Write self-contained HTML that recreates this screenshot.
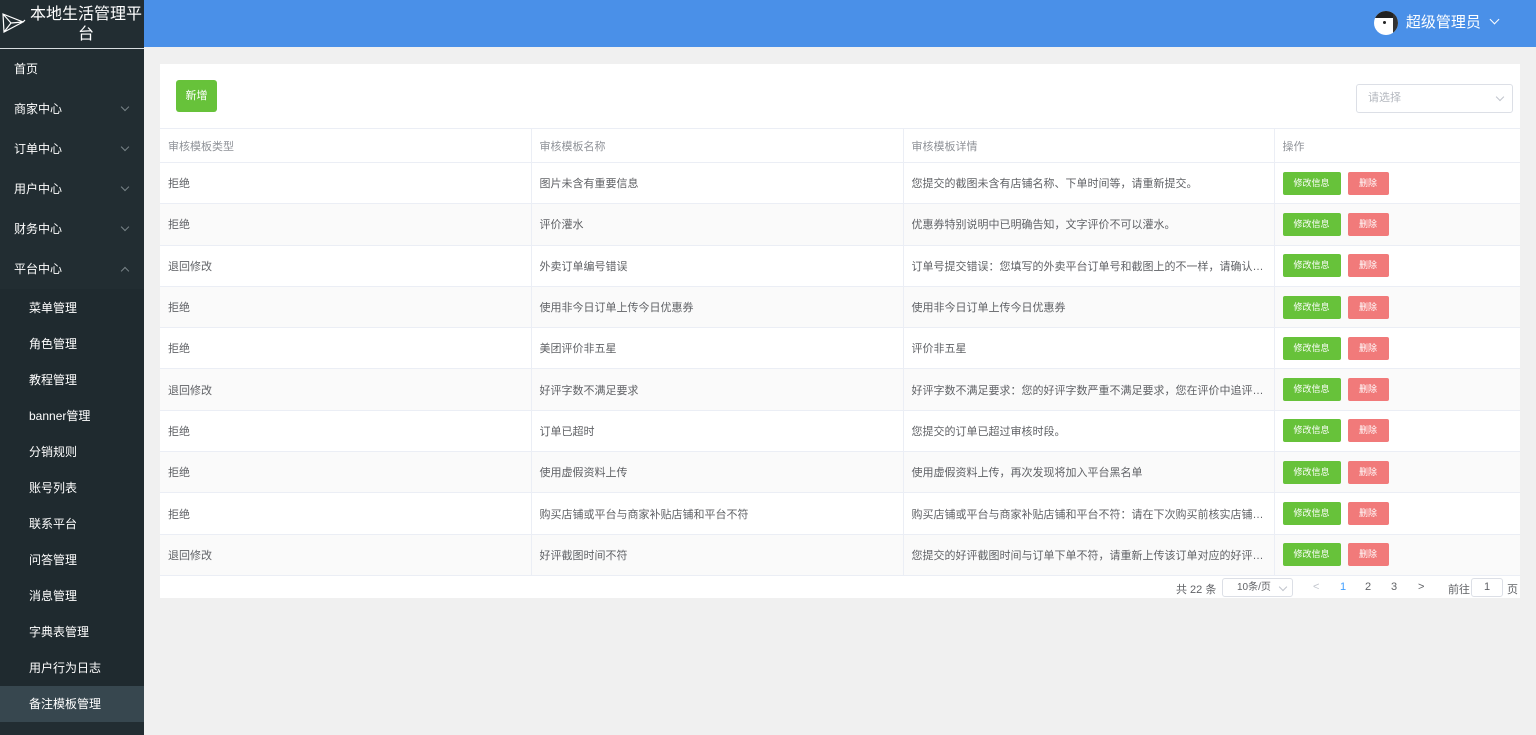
<!DOCTYPE html>
<html><head><meta charset="utf-8">
<style>
*{margin:0;padding:0;box-sizing:border-box}
body{width:1536px;height:735px;overflow:hidden;background:#f0f0f0;font-family:"Liberation Sans","Noto Sans CJK SC",sans-serif;position:relative}
.side{position:absolute;left:0;top:0;width:144px;height:735px;background:#222d32}
.logo{height:49px;border-bottom:1px solid #d8dde0;background:#222d32;color:#fff;position:relative}
.logo .t{position:absolute;left:30px;top:5px;width:112px;text-align:center;font-size:16px;line-height:20px}
.item{height:40px;line-height:40px;color:#fff;font-size:12px;padding-left:14px;position:relative}
.item .ar{position:absolute;right:16px;top:15px;width:6px;height:6px;border-right:1px solid #7a8489;border-bottom:1px solid #7a8489;transform:rotate(45deg)}
.item .up{transform:rotate(-135deg);top:19px}
.sub{height:36px;line-height:36px;color:#fff;font-size:12px;padding-left:29px;background:#1f2a2f}
.subs{padding-top:1px;background:#1f2a2f}
.sub.act{background:#37474f}
.top{position:absolute;left:144px;top:0;right:0;height:47px;background:#4a90e8}
.user{position:absolute;right:38px;top:12px;color:#fff;font-size:15px;line-height:22px;padding-left:32px}
.av{position:absolute;left:0;top:-1px;width:24px;height:24px;border-radius:50%;background:#fff;overflow:hidden}
.card{position:absolute;left:160px;top:64px;width:1360px;height:534px;background:#fff}
.btn-add{position:absolute;left:16px;top:16px;width:41px;height:32px;background:#67c23a;color:#fff;font-size:11px;line-height:32px;text-align:center;border-radius:3px}
.sel{position:absolute;left:1196px;top:20px;width:157px;height:29px;border:1px solid #dcdfe6;border-radius:3px;color:#b4b8bf;font-size:11px;line-height:27px;padding-left:11px}
.sel::after,.ps::after{content:"";position:absolute;right:9px;top:9px;width:5px;height:5px;border-right:1px solid #c0c4cc;border-bottom:1px solid #c0c4cc;transform:rotate(45deg)}
table{position:absolute;left:0;top:64px;width:1360px;border-collapse:collapse;font-size:11px;color:#606266;table-layout:fixed;border-top:1px solid #ebeef5}
td,th{border-bottom:1px solid #ebeef5;border-right:1px solid #ebeef5;text-align:left;font-weight:normal;padding-left:8px;padding-right:1px;white-space:nowrap;overflow:hidden;text-overflow:ellipsis}
th{height:34px;color:#909399}
td{height:41.3px}
tr:nth-child(odd) td{background:#fff}
tbody tr:nth-child(even) td{background:#fafafa}
tr>*:last-child{border-right:none}
.b1{display:inline-block;width:58px;height:23px;line-height:23px;text-align:center;background:#67c23a;color:#fff;font-size:9px;border-radius:2px;margin-right:7px}
.b2{display:inline-block;width:41px;height:23px;line-height:23px;text-align:center;background:#f17a7a;color:#fff;font-size:9px;border-radius:2px}
.pg{position:absolute;top:512px;left:0;width:1360px;height:22px;font-size:11px;color:#606266}
.pg span{position:absolute;top:5px}
.ps{position:absolute;left:1062px;top:2px;width:71px;height:19px;border:1px solid #dcdfe6;border-radius:3px;font-size:10px;line-height:17px;padding-left:14px}
.ps::after{top:5px;right:6px}
.pi{position:absolute;left:1311px;top:2px;width:32px;height:19px;border:1px solid #dcdfe6;border-radius:3px;text-align:center;line-height:17px}
</style></head><body>
<div class="side">
 <div class="logo">
  <svg style="position:absolute;left:2px;top:12px" width="24" height="22" viewBox="0 0 24 22" fill="none" stroke="#fff" stroke-width="1.2"><path d="M1 2 L21 10 L2 20 Z M1 2 L9 11 L2 20 M9 11 L21 10 M21 10 L23 8"/></svg>
  <div class="t">本地生活管理平台</div>
 </div>
 <div class="item">首页</div>
 <div class="item">商家中心<i class="ar"></i></div>
 <div class="item">订单中心<i class="ar"></i></div>
 <div class="item">用户中心<i class="ar"></i></div>
 <div class="item">财务中心<i class="ar"></i></div>
 <div class="item">平台中心<i class="ar up"></i></div>
 <div class="subs">
 <div class="sub">菜单管理</div>
 <div class="sub">角色管理</div>
 <div class="sub">教程管理</div>
 <div class="sub">banner管理</div>
 <div class="sub">分销规则</div>
 <div class="sub">账号列表</div>
 <div class="sub">联系平台</div>
 <div class="sub">问答管理</div>
 <div class="sub">消息管理</div>
 <div class="sub">字典表管理</div>
 <div class="sub">用户行为日志</div>
 <div class="sub act">备注模板管理</div>
 </div>
</div>
<div class="top">
 <div class="user"><div class="av"><div style="position:absolute;left:0;top:0;width:24px;height:7px;background:#222"></div><div style="position:absolute;right:0;top:0;width:5px;height:24px;background:#333"></div><div style="position:absolute;left:9px;top:10px;width:3px;height:3px;border-radius:50%;background:#222"></div></div>超级管理员 <span style="display:inline-block;width:7px;height:7px;border-right:1.5px solid #fff;border-bottom:1.5px solid #fff;transform:rotate(45deg);margin-left:6px;position:relative;top:-4px"></span></div>
</div>
<div class="card">
 <div class="btn-add">新增</div>
 <div class="sel">请选择</div>
 <table>
  <colgroup><col style="width:371px"><col style="width:372px"><col style="width:371px"><col></colgroup>
  <thead><tr><th>审核模板类型</th><th>审核模板名称</th><th>审核模板详情</th><th>操作</th></tr></thead>
  <tbody>
  <tr><td>拒绝</td><td>图片未含有重要信息</td><td>您提交的截图未含有店铺名称、下单时间等，请重新提交。</td><td><span class="b1">修改信息</span><span class="b2">删除</span></td></tr>
  <tr><td>拒绝</td><td>评价灌水</td><td>优惠券特别说明中已明确告知，文字评价不可以灌水。</td><td><span class="b1">修改信息</span><span class="b2">删除</span></td></tr>
  <tr><td>退回修改</td><td>外卖订单编号错误</td><td>订单号提交错误：您填写的外卖平台订单号和截图上的不一样，请确认是否为...</td><td><span class="b1">修改信息</span><span class="b2">删除</span></td></tr>
  <tr><td>拒绝</td><td>使用非今日订单上传今日优惠券</td><td>使用非今日订单上传今日优惠券</td><td><span class="b1">修改信息</span><span class="b2">删除</span></td></tr>
  <tr><td>拒绝</td><td>美团评价非五星</td><td>评价非五星</td><td><span class="b1">修改信息</span><span class="b2">删除</span></td></tr>
  <tr><td>退回修改</td><td>好评字数不满足要求</td><td>好评字数不满足要求：您的好评字数严重不满足要求，您在评价中追评后截图...</td><td><span class="b1">修改信息</span><span class="b2">删除</span></td></tr>
  <tr><td>拒绝</td><td>订单已超时</td><td>您提交的订单已超过审核时段。</td><td><span class="b1">修改信息</span><span class="b2">删除</span></td></tr>
  <tr><td>拒绝</td><td>使用虚假资料上传</td><td>使用虚假资料上传，再次发现将加入平台黑名单</td><td><span class="b1">修改信息</span><span class="b2">删除</span></td></tr>
  <tr><td>拒绝</td><td>购买店铺或平台与商家补贴店铺和平台不符</td><td>购买店铺或平台与商家补贴店铺和平台不符：请在下次购买前核实店铺以及对...</td><td><span class="b1">修改信息</span><span class="b2">删除</span></td></tr>
  <tr><td>退回修改</td><td>好评截图时间不符</td><td>您提交的好评截图时间与订单下单不符，请重新上传该订单对应的好评截图。</td><td><span class="b1">修改信息</span><span class="b2">删除</span></td></tr>
  </tbody>
 </table>
 <div class="pg">
  <span style="left:1016px">共 22 条</span>
  <div class="ps">10条/页</div>
  <span style="left:1153px;color:#c0c4cc">&lt;</span>
  <span style="left:1180px;color:#409eff">1</span>
  <span style="left:1205px">2</span>
  <span style="left:1231px">3</span>
  <span style="left:1258px">&gt;</span>
  <span style="left:1288px">前往</span>
  <div class="pi">1</div>
  <span style="left:1347px">页</span>
 </div>
</div>
</body></html>
